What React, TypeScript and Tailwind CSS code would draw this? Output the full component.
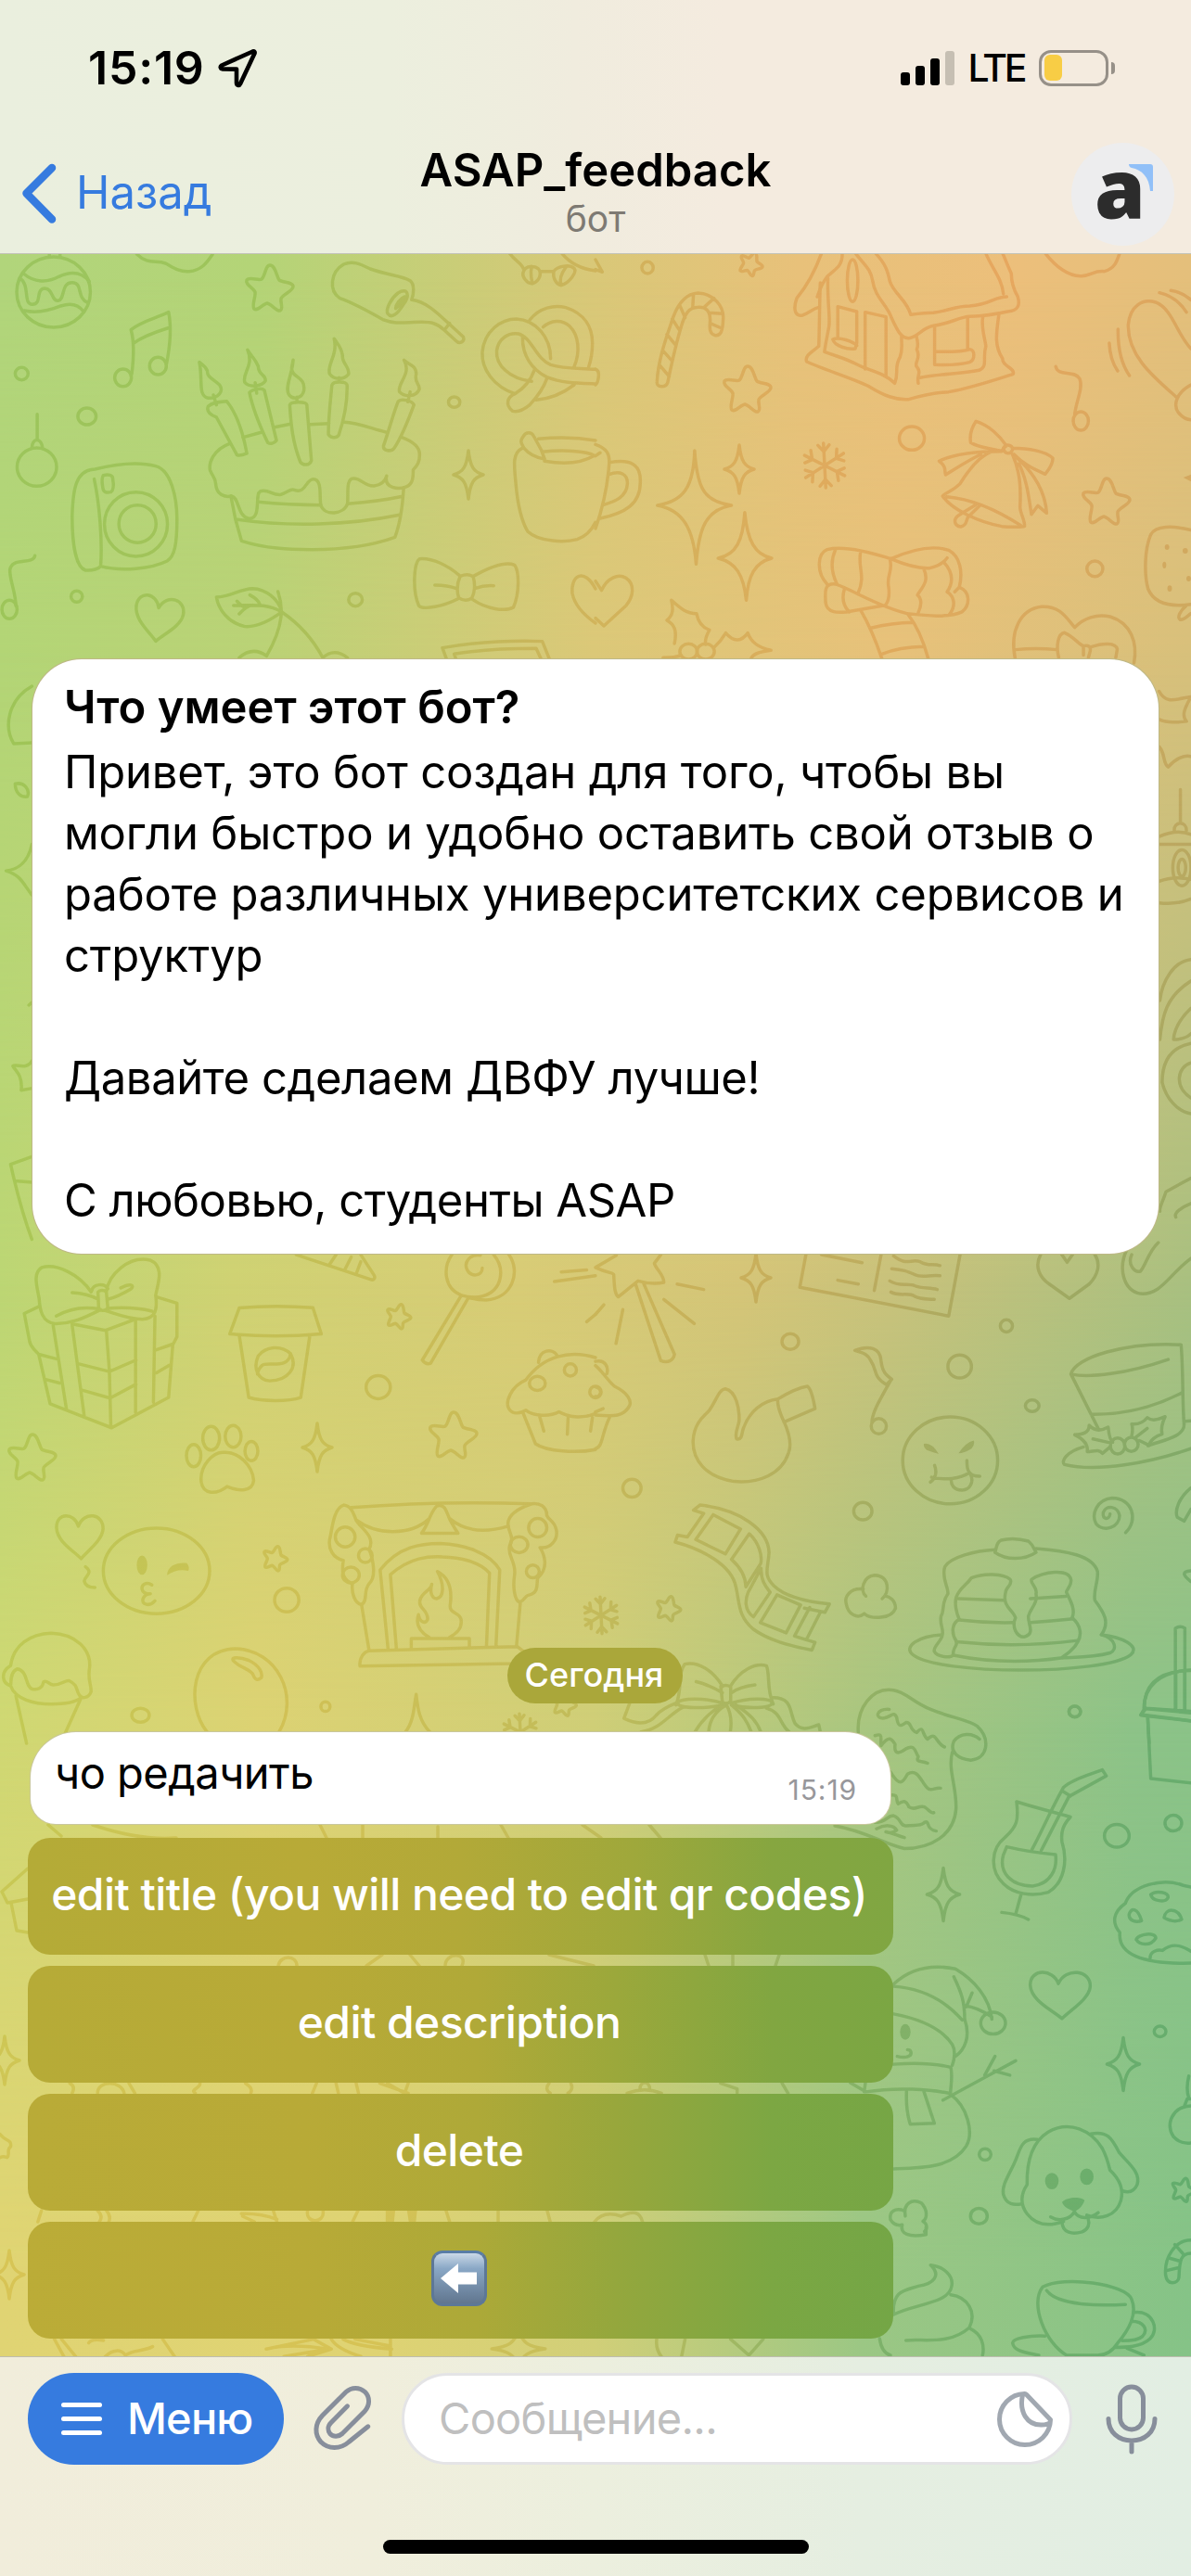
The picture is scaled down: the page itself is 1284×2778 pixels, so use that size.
import type { ReactNode } from "react";

/* ---------- Wallpaper ---------- */

const STAR =
  "M0 -24C6 -24 7 -12 10 -8C14 -5 25 -6 25 -1C25 4 13 8 12 12C11 17 15 23 11 25C7 26 2 18 -3 17C-8 18 -13 26 -17 23C-20 20 -15 9 -16 5C-18 0 -27 -3 -25 -8C-22 -12 -12 -7 -9 -9C-5 -12 -5 -24 0 -24Z";
const SPARKLE = "M0 -26C2 -8 6 -3 16 0C6 3 2 8 0 26C-2 8 -6 3 -16 0C-6 -3 -2 -8 0 -26Z";
const HEART = "M-2 -12C6 -34 34 -30 33 -8C32 8 12 22 2 34C-10 22 -32 10 -33 -10C-33 -32 -8 -32 -2 -12Z";
const FLAKE =
  "M0 -24V24M-21 -12L21 12M-21 12L21 -12M-6 -22L0 -15L6 -22M-6 22L0 15L6 22M-21 -4L-13 -7L-14 -17M21 -4L13 -7L14 -17M-21 4L-13 7L-14 17M21 4L13 7L14 17";

function Mark({ d, x, y, s = 1, r = 0, sy }: { d: string; x: number; y: number; s?: number; r?: number; sy?: number }) {
  return (
    <path d={d} vectorEffect="non-scaling-stroke" transform={`translate(${x} ${y}) rotate(${r}) scale(${s} ${sy ?? s})`} />
  );
}

function Patch({ t, d, solid, children }: { t: string; d: string[]; solid?: string[]; children?: ReactNode }) {
  return (
    <g transform={t}>
      {d.map((p, i) => (
        <path key={i} d={p} vectorEffect="non-scaling-stroke" />
      ))}
      {solid?.map((p, i) => (
        <path key={i} d={p} fill="#c6bad2" stroke="none" />
      ))}
      {children}
    </g>
  );
}

const ring = (x: number, y: number, rx: number, ry = rx) =>
  `M${x - rx} ${y}a${rx} ${ry} 0 1 0 ${rx * 2} 0a${rx} ${ry} 0 1 0 ${-rx * 2} 0Z`;

const TOP_LEFT = [
  // striped ball
  ring(141, 135, 97, 114),
  "M130 10V20M158 10V22M62 75C90 105 125 105 155 85C190 65 215 70 235 100M52 90C80 110 60 175 85 175C112 175 92 125 118 123C140 123 135 165 153 163C172 160 160 103 190 104C220 105 200 155 232 170M64 195C100 205 130 195 160 180C190 168 208 178 220 198",
  // cloud edge
  "M360 12C390 48 410 30 436 42C455 55 470 70 498 68C530 65 545 40 560 12",
  // notes
  "M345 257C370 230 410 220 444 200C452 250 448 310 438 370M345 257C355 300 352 350 347 400M352 300C380 275 415 262 446 250",
  ring(324, 412, 22, 28),
  ring(416, 374, 22, 28),
  ring(57, 399, 17, 20),
  ring(229, 537, 24, 27),
  ring(1196, 491, 15, 17),
  ring(202, 1120, 15, 18),
  ring(936, 1130, 18, 21),
  // bauble
  "M98 530V612M84 640C84 605 110 605 112 640",
  ring(97, 701, 52, 62),
  // camera
  "M250 708C310 690 370 685 410 698C450 710 466 800 466 870C466 950 460 990 440 1005C400 1030 320 1040 265 1022C260 1030 245 1037 225 1035C200 1025 190 950 190 860C192 770 200 710 250 708ZM248 740C262 820 270 940 265 1022",
  ring(358, 886, 83, 104),
  ring(362, 885, 49, 61),
  "M272 728C285 724 298 726 297 740C300 760 300 775 292 782C280 785 272 782 271 770C269 755 266 740 272 728Z",
  // quaver
  "M92 988C86 1020 30 990 26 1035C26 1070 40 1100 42 1150",
  ring(25, 1162, 20, 30),
  // dart
  "M905 45C930 32 950 45 975 60C1020 80 1060 82 1080 98C1092 110 1090 140 1084 160C1120 165 1150 200 1180 235L1220 280C1225 295 1210 305 1200 292L1170 258C1150 235 1135 232 1110 232C1070 232 1040 240 1010 225C960 190 930 170 895 155C865 130 870 70 905 45ZM1184 236L1170 258",
  "M1048 138C1075 118 1080 148 1062 175C1045 210 1030 220 1021 205C1015 190 1030 155 1048 138ZM1066 150C1054 155 1042 175 1042 188C1050 180 1062 165 1066 150Z",
  // bird feet
  "M1342 10C1360 40 1375 40 1380 65C1370 85 1390 110 1403 107C1420 100 1428 75 1418 60C1408 48 1385 50 1380 65M1400 52C1396 75 1400 100 1403 107M1422 68H1458C1455 90 1465 110 1478 113C1500 105 1520 70 1512 58C1500 45 1468 50 1458 68M1490 55C1478 75 1472 95 1478 113M1480 10C1500 40 1530 60 1568 66",
  // pretzel
  "M1356 464C1300 440 1268 385 1270 330C1275 260 1320 222 1360 222C1410 225 1450 280 1450 350M1400 424C1340 415 1305 370 1308 325C1312 285 1340 265 1365 270C1400 280 1410 350 1450 370C1490 385 1530 380 1568 385M1376 280C1375 340 1400 385 1440 410C1480 430 1520 430 1568 432M1395 225C1420 185 1460 175 1490 185C1540 205 1560 250 1560 300C1560 330 1555 360 1550 378M1430 248C1450 225 1480 222 1500 245C1525 275 1528 330 1512 376M1408 385C1395 430 1375 450 1356 464C1335 475 1330 500 1350 520C1365 525 1380 515 1395 500C1410 480 1430 450 1440 415M1412 484C1450 480 1480 465 1512 435",
  // cake
  "M605 625C560 645 550 690 553 710C558 730 568 735 568 755C570 790 590 800 610 795C630 800 625 860 655 868C690 870 670 790 685 780C705 770 720 795 740 790C755 785 765 770 775 775C805 790 805 740 825 740C850 740 840 800 845 825C855 860 905 855 915 820C918 790 910 740 930 738C950 735 960 765 985 762C1005 758 1015 745 1018 730C1010 770 1050 775 1070 765C1090 755 1088 725 1088 710C1100 695 1105 685 1105 660C1105 630 1080 615 1058 605M640 605L690 588M720 573L765 562M816 563L866 560M906 556C945 558 980 578 1016 588",
  "M608 795L620 870L636 940C700 965 760 968 820 968C900 968 980 955 1040 928C1052 890 1060 830 1063 768M620 870C760 895 920 890 1052 856M680 814Q760 824 845 824M915 820Q1000 812 1060 796",
  "M548 505C560 490 580 490 597 488C625 530 640 590 650 657C640 662 630 665 624 662L570 540C550 530 544 518 548 505ZM657 460C665 448 690 445 696 452L728 615C722 625 712 628 705 622C685 570 665 510 657 460ZM763 500C765 488 808 488 808 500L820 680C815 698 798 696 791 685C770 620 766 560 763 500ZM874 436C878 422 912 424 914 436C915 490 905 550 892 598C885 610 870 606 865 596C864 550 870 490 874 436ZM1048 490C1055 478 1085 485 1090 500C1075 550 1060 600 1038 640C1030 652 1008 650 1010 632C1025 580 1035 530 1048 490Z",
  "M525 362C535 420 520 470 548 478C575 480 590 455 578 435C560 415 545 410 546 390C542 375 532 370 525 362ZM652 322C670 375 635 400 645 428C658 445 690 440 699 422C700 400 680 405 680 375C672 350 660 340 652 322ZM772 355C770 400 750 440 760 465C770 485 795 480 800 455C806 405 768 415 768 380ZM880 286C890 340 860 370 868 400C880 420 905 420 918 400C920 375 900 365 902 340C898 310 890 305 880 286ZM1064 355C1085 400 1045 430 1052 458C1065 475 1095 475 1104 450C1106 430 1090 430 1096 400C1096 370 1075 370 1064 355ZM562 468L570 500M672 428L676 462M782 475V490M893 412V424M1080 458L1074 490",
  // bow tie
  "M1210 1052C1180 1020 1140 995 1105 998C1090 1010 1085 1100 1103 1150C1115 1165 1170 1150 1205 1128M1250 1052C1290 1025 1330 1005 1355 1018C1368 1040 1368 1110 1352 1155C1330 1170 1280 1160 1245 1130M1212 1054C1225 1048 1238 1048 1246 1056C1252 1080 1250 1110 1242 1126C1230 1135 1218 1133 1208 1124C1202 1100 1204 1075 1212 1054ZM1145 1083Q1180 1083 1202 1094M1250 1094Q1275 1083 1300 1085",
  // cherries
  "M570 1122C610 1120 630 1095 665 1094C700 1095 735 1130 742 1170C720 1190 680 1220 645 1217C600 1205 575 1160 570 1122ZM615 1149C660 1150 700 1140 742 1170M630 1176Q650 1150 665 1148M624 1135Q635 1150 640 1152M658 1115Q680 1130 684 1145M732 1104C745 1150 750 1210 702 1312M742 1170C790 1210 825 1260 850 1318M630 1318Q665 1280 702 1312M850 1318Q880 1285 915 1318",
  // picture frame
  "M1175 1320L1165 1286C1250 1268 1350 1262 1428 1265L1446 1320M1200 1320L1196 1306C1270 1290 1340 1288 1412 1288L1424 1320",
  // mug
  "M1418 610C1460 605 1520 605 1568 615M1375 640C1350 655 1353 690 1358 750C1362 810 1370 870 1390 910C1420 945 1490 945 1520 935C1545 925 1560 900 1568 880M1378 602C1385 585 1400 588 1405 600L1425 645L1434 675C1410 670 1390 655 1380 640C1370 620 1370 615 1378 602ZM1428 652C1480 645 1545 648 1565 664C1530 690 1480 692 1434 682",
];

const TOP_RIGHT = [
  "M0 30L18 70L0 62",
  ring(137, 56, 15, 19),
  ring(833, 608, 33, 38),
  ring(1315, 1030, 21, 25),
  "M0 385Q10 388 8 410Q6 430 0 435",
  // candy cane
  "M162 425C165 350 190 270 205 215C220 165 240 140 270 138C310 140 340 180 336 225C335 260 330 278 315 275C300 270 300 255 302 225C302 195 290 182 270 184C245 185 235 205 225 250C210 310 200 370 190 428C185 445 160 445 162 425ZM258 142L256 184M222 178L236 218M202 222L222 260M188 272L212 308M178 325L202 358M168 370L194 408M312 155L288 182M334 205L300 202M332 252L302 236",
  // gingerbread house
  "M595 10C580 60 560 110 530 155C520 190 525 215 545 210C560 205 570 190 588 184M650 10C650 55 630 60 610 85C595 110 588 135 584 150M685 10C710 50 725 60 730 100C735 150 770 180 780 220C795 260 805 285 825 284C850 280 860 250 890 244C930 238 960 215 985 214C1030 212 1060 205 1085 198C1115 195 1118 175 1112 150C1098 120 1095 100 1095 75C1085 50 1080 30 1072 10M738 10C765 45 770 70 775 100C785 140 820 160 830 208C850 205 870 202 890 202C930 195 950 180 985 180C1040 175 1050 150 1083 150M1028 10C1045 60 1070 90 1074 140",
  "M592 105C590 160 590 240 588 310C570 330 550 340 556 360C600 385 680 415 720 440C760 470 790 485 825 482C870 465 900 460 930 458C990 445 1050 420 1100 400C1105 380 1070 375 1072 350C1050 310 1055 270 1062 210M612 90C610 160 618 210 615 245C610 280 605 305 603 328C640 345 660 350 690 370C720 390 760 395 788 430C800 395 785 380 802 345C810 320 805 300 806 280M845 278C850 300 850 310 846 320C858 350 840 360 845 375C860 395 845 405 850 430M855 412C900 400 960 400 1010 388C1035 375 1018 350 1028 310C1025 280 1015 250 1020 216",
  "M638 182L688 198V300L684 318C665 322 630 310 625 288C640 278 680 295 688 308M638 182V285M710 384V200L765 215V405M893 246V370C930 372 960 370 985 362C1000 355 1000 320 985 320C965 330 920 328 896 328M980 218V320",
  ring(677, 98, 14, 68),
  "M1185 10C1210 50 1245 85 1280 83C1310 80 1310 65 1340 68C1365 60 1372 40 1380 10",
  // shaking heart with motion lines
  "M1530 475C1470 410 1400 340 1403 240C1408 180 1440 155 1475 168C1520 190 1530 270 1568 318M1568 435C1530 460 1520 500 1535 525C1545 540 1555 548 1568 548M1353 300Q1355 355 1375 390M1376 255Q1375 350 1406 405M1485 137Q1530 150 1556 200M1515 130Q1545 135 1568 160",
  "M1212 376C1218 410 1260 385 1275 415C1285 445 1265 490 1262 530",
  ring(1278, 552, 20, 30),
  // bell with ribbon
  "M1002 553C1035 565 1065 600 1082 632C1075 640 1070 645 1070 650C1040 640 1010 640 988 622C985 600 990 575 1002 553ZM1098 640C1140 640 1185 650 1204 672C1205 690 1190 715 1184 724C1150 705 1125 690 1102 660M1074 640C1080 625 1100 628 1098 645C1094 660 1078 662 1074 640ZM1070 650C1000 650 940 660 905 682C925 700 918 710 922 726C950 705 980 680 1015 660M1045 650C1010 665 980 715 960 755C940 780 920 785 914 795C940 840 1010 880 1070 893C1095 896 1125 895 1130 892C1130 870 1118 850 1118 830C1120 780 1120 720 1098 660M925 797C1000 805 1070 850 1120 890M1098 660C1160 720 1185 790 1188 850L1165 826L1148 854C1140 790 1135 740 1115 690M1000 824L958 856C940 870 945 892 962 894C980 890 975 870 982 862L1010 828",
  // sparkles
  "M261 648C268 780 290 812 358 825C290 840 272 900 265 1015C258 900 230 840 163 825C230 812 258 770 261 648ZM393 848C400 940 420 985 464 996C420 1010 402 1050 397 1132C390 1050 370 1010 323 996C370 985 388 940 393 848Z",
  // mug handle
  "M0 628C30 640 38 660 36 690C32 760 20 830 0 900M38 686C90 675 120 690 118 750C118 820 80 850 10 868M34 726C65 710 85 725 84 755C82 800 50 812 20 824M0 665L12 655",
  "M0 1070L16 1100C30 1060 60 1045 80 1060C105 1080 100 1120 80 1150L22 1215L0 1190",
  // holly
  "M208 1272C215 1230 208 1210 188 1197C205 1180 205 1160 200 1132C225 1160 240 1175 266 1175C270 1200 280 1220 300 1228C290 1250 288 1265 290 1275M312 1285C325 1270 335 1255 343 1238C365 1270 385 1265 401 1238C410 1270 430 1285 462 1294C430 1300 415 1305 410 1320M178 1318Q210 1318 225 1310",
  ring(245, 1298, 23, 25),
  ring(290, 1298, 23, 25),
  // scarf
  "M610 1080C580 1040 585 980 610 968C650 955 720 975 778 998C820 975 880 950 930 970C960 990 968 1040 958 1090C990 1105 985 1150 965 1170C930 1190 870 1182 820 1175C740 1150 680 1100 632 1080C600 1075 605 1110 606 1140C610 1175 640 1172 660 1170L755 1150M778 998C820 1020 850 1030 880 1028C900 1022 915 1015 926 995M632 968C620 1000 620 1040 636 1080M698 975C690 1030 712 1050 692 1108M775 998C785 1040 765 1050 772 1090C775 1120 770 1140 762 1150M864 1030C880 1070 860 1090 848 1115C862 1130 858 1150 850 1172M918 1010C940 1040 945 1070 926 1105C945 1120 950 1150 932 1178M655 1098Q645 1140 668 1170M700 1168C725 1220 740 1270 754 1320M822 1176C850 1220 865 1270 876 1320M725 1222Q780 1205 836 1204M754 1306Q800 1284 864 1282M958 1090L946 1105",
  // heart box
  "M1105 1320C1090 1230 1120 1160 1175 1153C1225 1150 1240 1190 1262 1220C1285 1190 1320 1175 1355 1185C1410 1205 1428 1270 1418 1335M1106 1292Q1160 1286 1215 1292M1220 1318C1212 1280 1218 1240 1235 1237C1260 1250 1272 1275 1285 1280V1310M1305 1283C1335 1270 1370 1268 1374 1290L1370 1318M1285 1280Q1305 1275 1303 1295L1298 1318",
  // strawberry
  "M1568 905C1520 890 1475 890 1462 920C1445 970 1445 1050 1455 1095C1470 1140 1510 1155 1568 1145M1555 1150C1540 1165 1530 1190 1540 1195C1555 1195 1560 1180 1568 1175",
];

const MID_LEFT = [
  // gift
  "M240 155C210 100 150 65 110 78C85 95 98 140 103 175C105 210 110 250 145 254C185 255 215 240 265 210M280 155C285 100 340 40 395 55C435 75 415 130 410 165C415 210 410 238 375 240C340 240 310 225 275 212M242 150C245 130 275 125 284 145M258 155C262 148 275 148 280 155L284 205C278 215 265 215 260 208ZM190 157Q230 160 258 177M285 177Q310 170 345 145C355 135 345 125 318 142M148 230Q200 195 262 208M284 206Q350 200 400 215",
  "M103 200L64 222L78 310C82 330 95 340 102 350L132 505L294 580L444 485L455 320L466 295V190L412 170M190 255L278 275L357 240M280 275L288 400L292 580M140 260L175 522M190 258L222 545M357 240V532M408 230L404 500M102 350L148 364M118 428L157 440M208 380L288 404L358 368M216 462L290 487L358 444M412 336L455 318M412 408L446 384",
  // pizza
  "M780 38L975 115C985 120 990 110 984 100L950 38M885 38L868 68M925 45L908 85M950 60L938 98",
  // lollipop
  "M1215 165C1170 145 1165 80 1190 38M1300 38C1330 80 1325 150 1270 168C1250 175 1230 170 1215 165M1340 38C1372 90 1350 175 1280 180C1260 180 1250 178 1235 172M1270 80C1270 105 1240 110 1230 85C1220 60 1240 35 1265 40M1215 165L1112 368C1118 378 1125 382 1134 378L1234 172",
  ring(996, 453, 32, 36),
  ring(755, 1119, 32, 37),
  ring(370, 1480, 23, 22),
  ring(857, 1453, 12, 15),
  // coffee cup
  "M630 205C690 198 760 198 824 204L846 286C770 294 680 294 605 286ZM630 290L655 485C690 498 760 498 792 485L816 290M765 348C740 320 700 325 680 355C665 395 680 430 710 433C760 432 785 390 765 348ZM765 348C760 400 700 370 690 385Q680 395 678 412",
  // paw
  "M590 657C560 655 525 700 530 750C535 790 570 790 598 764C630 780 665 780 668 745C665 700 630 655 590 657Z",
  ring(510, 667, 19, 35),
  ring(556, 613, 22, 37),
  ring(614, 607, 21, 34),
  ring(662, 653, 17, 30),
  // wand rays
  "M1478 92L1545 86M1460 122L1568 104M1545 248L1568 225",
  // muffin
  "M1568 360C1500 335 1430 355 1385 430C1345 450 1330 500 1340 520C1350 540 1370 535 1385 525C1405 545 1450 545 1472 530C1500 550 1540 550 1568 535M1378 535L1410 630C1440 655 1520 660 1568 648M1420 540L1432 590M1496 548L1494 600M1560 548L1555 590M1418 375C1420 335 1455 330 1466 352",
  ring(1415, 441, 21, 22),
  ring(1502, 399, 16, 19),
  ring(1568, 468, 15, 18),
  // kissing face
  ring(412, 1028, 140, 134),
  "M225 1015C248 1035 222 1045 222 1060C225 1078 240 1080 250 1080M400 1072C385 1060 372 1072 374 1085C376 1100 390 1100 396 1100C380 1100 370 1120 380 1130C392 1138 402 1130 408 1122",
  // fireplace
  "M925 830C1080 815 1250 812 1400 818M905 822C880 830 875 890 870 920C860 960 880 990 904 995C900 1030 900 1055 928 1068C925 1100 935 1130 952 1134C970 1120 955 1095 972 1068C990 1050 985 1000 972 960C990 920 950 895 938 870C930 845 925 825 905 822ZM1400 818C1370 830 1335 850 1338 885C1340 910 1355 920 1342 950C1335 980 1360 1000 1355 1040C1350 1080 1355 1120 1368 1126C1385 1120 1380 1105 1395 1103C1420 1095 1412 1070 1416 1050C1445 1020 1435 980 1422 955C1450 960 1470 930 1465 900C1460 870 1445 870 1440 855C1440 825 1420 815 1400 818Z",
  "M940 870C990 915 1080 920 1130 865M1185 865C1230 910 1290 905 1338 888M1150 825C1160 820 1170 825 1175 840C1185 875 1190 880 1206 910H1110C1130 880 1130 850 1150 825Z",
  ring(909, 922, 26, 31),
  ring(962, 980, 18, 22),
  ring(924, 1041, 22, 25),
  ring(1416, 893, 24, 29),
  ring(1367, 946, 23, 25),
  ring(1403, 1030, 17, 20),
  "M1022 1274L1001 1025C1050 950 1110 942 1160 942C1220 945 1290 970 1316 1025L1306 1265M1044 1274L1028 1040C1080 985 1130 982 1165 984C1210 985 1265 1000 1289 1035L1281 1265M952 1134L972 1278M1370 1130L1360 1265M972 1278L1362 1265L1400 1300L1350 1318L948 1326C945 1300 960 1280 972 1278ZM1083 1268V1240H1236V1264M1130 1236C1100 1215 1095 1190 1102 1165C1105 1190 1120 1195 1126 1180C1128 1150 1100 1145 1106 1120C1110 1095 1135 1090 1137 1070C1130 1100 1140 1115 1150 1115C1170 1110 1170 1070 1152 1030C1185 1050 1190 1090 1186 1130C1180 1165 1210 1155 1214 1180C1218 1210 1200 1225 1184 1236",
  // ice cream
  "M28 1325C35 1260 80 1225 135 1223C200 1225 240 1275 236 1330C230 1370 240 1380 240 1405C235 1425 215 1432 208 1415C200 1400 205 1385 182 1372C170 1370 165 1385 140 1385C130 1385 125 1370 115 1375C112 1395 100 1402 85 1398C65 1390 75 1340 45 1335C25 1345 30 1380 28 1388C5 1380 0 1345 28 1325ZM28 1388C40 1430 90 1445 135 1445C170 1445 200 1438 212 1427M42 1420L70 1568M212 1430L172 1535",
  // balloon
  "M545 1532C490 1450 500 1275 620 1272C730 1275 790 1420 735 1532M615 1310C605 1295 635 1300 655 1308C685 1325 692 1350 688 1363C675 1375 670 1365 665 1350C650 1330 630 1330 615 1310Z",
  "M1068 1532C1090 1500 1090 1450 1096 1415C1100 1460 1105 1500 1132 1532",
];

const MID_RIGHT = [
  // magic wand
  "M0 78C30 95 48 95 48 100C50 140 50 160 60 170L112 120C140 130 160 130 180 125C180 100 160 85 155 65L172 38M0 78L55 40M105 128L172 370C190 378 205 370 208 350L126 126M215 130L285 147M180 178L260 254M72 210L54 316M22 195L0 225",
  // letter
  "M554 38L538 140L930 230L960 38M595 38L702 63M752 38L734 150M638 118L692 130M785 42C820 75 830 50 855 60C875 75 890 65 907 72M780 82C810 85 820 90 840 100C860 112 880 100 907 104M775 120C800 140 825 125 840 135C860 145 880 140 900 147M778 155C800 170 825 155 840 168C860 180 875 175 892 178",
  ring(513, 310, 22, 25),
  ring(959, 388, 31, 36),
  ring(1082, 261, 16, 19),
  ring(1150, 511, 18, 18),
  ring(96, 769, 24, 28),
  ring(704, 841, 24, 27),
  ring(1262, 1469, 15, 17),
  // heart and sock
  "M1172 38C1155 75 1170 110 1195 130L1248 175L1300 130C1325 100 1330 65 1315 38M1228 38L1242 62L1256 38M1400 20C1375 80 1390 150 1435 160C1490 165 1510 100 1568 50M1412 38C1400 70 1420 95 1435 90C1450 70 1455 30 1482 0",
  // ribbon note
  "M683 338C720 320 750 330 752 370C755 405 765 415 780 428L766 445C730 420 742 400 725 370C715 345 700 345 683 338ZM778 430C745 500 730 530 728 560",
  ring(746, 575, 20, 24),
  // muffin edge
  "M0 372C25 365 35 390 30 410M0 385C20 405 30 430 50 450C85 470 95 495 90 510C75 545 50 545 0 540M38 545C15 600 20 640 0 645M0 452Q15 455 13 470Q10 485 0 482M0 530L20 520",
  // fortune cookie
  "M300 525C320 490 325 460 342 458C370 465 380 520 378 560C375 580 365 600 372 615C388 620 385 590 390 580C405 530 440 495 480 490C478 515 490 545 496 560C515 610 515 640 508 660C490 725 430 755 365 748C290 735 255 680 257 620C260 560 290 540 300 525ZM480 490C505 472 530 455 558 450C570 460 575 500 578 520L496 562",
  // tongue face
  ring(934, 682, 125, 136),
  "M893 698C900 720 895 740 882 750M885 735C920 745 960 740 985 720C990 730 1000 732 1012 732M978 682C978 700 980 715 985 720C1000 750 985 775 965 775C945 775 935 760 937 740",
  // top hat
  "M1252 412C1260 360 1400 310 1542 320C1548 400 1545 500 1550 570C1550 610 1490 620 1455 636M1252 412C1300 425 1400 410 1508 366M1252 412L1325 585M1305 538C1400 540 1480 510 1545 470M1285 640C1240 655 1225 685 1235 695C1320 720 1460 690 1568 645M1552 560L1568 558",
  "M1262 602C1285 600 1300 595 1300 572C1310 585 1325 595 1350 578C1352 600 1355 620 1362 625M1262 602C1285 615 1298 630 1295 655C1310 655 1325 645 1335 660L1355 640M1310 615L1352 626M1412 605C1415 590 1415 580 1412 568C1430 570 1445 560 1453 548C1465 560 1480 555 1500 545C1490 570 1490 590 1492 600C1475 605 1460 620 1458 635L1432 620M1420 612L1453 582",
  ring(1375, 637, 19, 25),
  ring(1411, 632, 18, 22),
  "M1396 908C1430 870 1415 800 1360 800C1320 805 1305 850 1318 880C1340 910 1380 890 1380 855C1375 825 1345 820 1337 845C1335 868 1352 870 1355 850",
  "M1568 768C1535 800 1525 840 1532 860L1550 872L1568 835M1568 1028C1540 1030 1550 1045 1568 1062",
  // film strip
  "M275 822C380 835 455 900 457 970C455 1020 440 1040 470 1075C500 1110 560 1125 616 1132L604 1158L550 1145M275 822L258 838L285 848L242 922L216 916L210 938C280 960 360 1010 370 1080C380 1130 375 1170 415 1210C455 1245 510 1262 570 1276L578 1252L555 1244L592 1158M310 852L382 897L342 975L264 930ZM405 912C430 940 440 980 435 1005L396 1078C395 1040 375 1010 358 992ZM436 1020C435 1060 450 1080 460 1095L416 1172C390 1150 395 1115 402 1095ZM478 1103L540 1135L502 1222L434 1190ZM564 1143L524 1232L555 1244",
  // popcorn
  "M712 1107C695 1090 705 1045 735 1042C775 1045 775 1095 755 1115M705 1085C670 1080 655 1110 660 1130C665 1165 690 1180 708 1162C725 1180 780 1180 790 1145C790 1120 775 1108 762 1106",
  // pancakes
  "M1052 962C1000 965 935 985 920 1015C910 1050 930 1080 928 1100C910 1130 920 1150 910 1170C905 1200 920 1210 912 1235C905 1255 890 1265 892 1280C900 1300 935 1300 942 1292C940 1265 955 1265 950 1248C935 1220 940 1190 958 1180C950 1160 945 1130 950 1110C960 1080 975 1075 990 1050C1020 1035 1075 1035 1092 1055C1100 1070 1080 1080 1080 1095C1070 1140 1100 1150 1106 1175C1095 1205 1110 1235 1128 1235C1160 1225 1138 1195 1140 1170C1145 1145 1165 1130 1160 1100C1165 1080 1145 1070 1148 1055C1180 1030 1245 1020 1252 1055C1255 1075 1240 1085 1240 1095C1250 1120 1265 1150 1255 1175C1280 1200 1280 1230 1270 1250C1260 1275 1245 1285 1230 1298M1160 958C1240 965 1310 980 1322 1030C1325 1060 1310 1090 1315 1120C1340 1160 1355 1190 1332 1228C1370 1240 1375 1275 1355 1285C1310 1300 1270 1298 1230 1300",
  "M955 1115L1076 1120M1145 1115L1238 1108M958 1182Q1030 1192 1100 1190M1145 1190Q1200 1185 1258 1178M950 1250Q1110 1270 1270 1246M942 1292Q1080 1325 1230 1300M1068 932C1090 925 1120 928 1140 935C1155 950 1155 960 1160 970C1130 995 1080 995 1052 970C1058 950 1055 940 1068 932ZM912 1228C850 1232 810 1265 835 1290C900 1355 1340 1355 1410 1290C1435 1262 1385 1235 1332 1228",
  // gift bow
  "M335 1390C310 1340 270 1310 235 1320C215 1350 230 1395 212 1448M355 1390C380 1340 420 1315 450 1325C460 1350 450 1400 468 1445M330 1390C340 1385 350 1385 356 1392V1435C350 1445 340 1445 334 1438ZM265 1375Q300 1385 334 1410M358 1410Q380 1390 420 1385M335 1442C290 1425 225 1425 215 1442C220 1460 290 1460 335 1448M358 1442C400 1425 460 1425 465 1440C465 1460 400 1460 358 1448M90 1442L75 1490C110 1510 140 1510 160 1480C175 1460 195 1450 212 1442M120 1532C170 1525 190 1480 230 1455M468 1425C520 1425 510 1470 525 1505C545 1535 570 1515 588 1510L592 1532M450 1458C490 1470 485 1510 510 1532M335 1448C300 1470 280 1495 262 1532M345 1448C310 1470 300 1500 298 1532M345 1448C360 1480 358 1510 355 1532M358 1448C390 1480 400 1500 410 1532M370 1448C410 1480 425 1500 435 1532",
  // drink
  "M1527 1465V1208C1535 1202 1545 1202 1552 1208V1465M1445 1458C1445 1380 1485 1340 1568 1340M1450 1458L1568 1468M1436 1480L1450 1458M1436 1480L1568 1498M1454 1485L1458 1568",
];

const LOW_RIGHT = [
  // scroll
  "M76 145C70 90 120 40 190 48C230 52 250 75 310 92C370 110 430 115 460 130C505 160 495 205 440 208C400 205 370 190 385 165C405 145 445 145 468 160M380 190C365 230 395 270 392 320C385 380 310 410 225 410C160 400 100 370 0 358M176 92C130 90 130 115 160 112C180 110 190 95 200 110C205 135 215 130 230 122C250 120 240 140 265 145C290 125 280 150 300 160C330 140 325 170 355 178M130 152C160 145 145 160 150 175C175 150 185 160 195 172C190 200 215 190 230 182C260 170 260 190 270 200C260 215 280 208 300 215M180 235C210 270 220 260 235 240C270 225 280 260 300 272C310 280 325 270 342 272M180 288C210 285 195 300 205 308C225 300 230 300 240 315C260 325 270 310 290 315C310 325 310 330 320 328M130 350C170 350 165 335 190 335C215 340 210 360 230 358C260 355 280 360 290 350C310 345 290 365 328 370M135 365C160 355 190 355 200 368C180 380 165 370 165 372C190 375 200 380 225 385",
  // cocktail
  "M588 303C640 315 700 325 762 338C740 355 730 370 735 395C755 440 740 490 690 510C640 520 580 515 545 490C500 460 505 410 550 385C590 360 595 345 588 303ZM556 406C610 415 660 420 714 424C720 455 700 490 640 496C570 495 530 465 545 425ZM638 412C670 370 700 320 740 270C770 250 830 240 865 230L878 244L760 290M668 414L758 290M735 278L762 290M602 516L585 560M540 556C570 558 600 562 626 572",
  ring(776, 97, 19, 12),
  ring(912, 381, 40, 26),
  ring(1095, 352, 27, 18),
  ring(1052, 828, 19, 12),
  ring(486, 1109, 19, 13),
  ring(466, 1250, 27, 18),
  // cup edge
  "M1000 90C1000 40 1050 5 1152 2M1103 5V92M1132 5V92M1000 90L1152 100M990 104L1002 90M990 104L1152 118M1012 108L1022 250L1152 260",
  // cookie
  "M940 535C960 495 1060 475 1130 495L1152 498M940 535C900 555 895 580 922 602C915 650 990 675 1152 672M1020 660C1020 645 1045 640 1060 643C1090 625 1120 630 1152 645M1022 515C1040 505 1080 510 1078 522C1070 535 1025 530 1022 515ZM952 560C960 545 980 545 992 575C975 580 950 575 952 560ZM1065 568C1070 545 1110 545 1122 572C1100 580 1075 572 1065 568ZM975 618C980 605 1040 600 1038 615C1020 635 985 630 975 618Z",
  // snowman
  "M190 720C250 680 320 675 390 685C450 710 500 750 508 800M190 725C290 730 360 760 412 802M385 703C410 740 420 760 420 800C440 840 420 870 390 885M190 788C280 800 345 820 380 858C390 870 388 890 380 905M422 770C455 772 480 782 508 795M444 740L425 772M190 903C250 900 320 900 375 910C382 930 375 950 374 970C310 960 200 955 100 966L50 945M100 940L95 966M202 885C230 890 250 885 246 875Q245 870 235 870M350 985L480 935L585 895M485 928L518 885M515 918L566 928M374 972C430 1000 450 1060 425 1090C380 1140 280 1140 190 1142M232 965C230 1000 235 1020 244 1040L322 1038L288 965",
  ring(512, 809, 40, 25),
  // dog
  "M655 1075C600 1070 600 1100 580 1130C560 1160 540 1180 545 1200C555 1225 580 1225 605 1222M622 1178C600 1200 600 1225 622 1245C650 1270 690 1275 740 1262M622 1178C620 1120 640 1080 690 1058C760 1030 830 1055 865 1095C880 1115 885 1130 890 1145C920 1165 935 1190 925 1215C910 1250 860 1260 815 1248M828 1062C880 1055 895 1070 920 1105C950 1130 990 1150 978 1178C965 1200 940 1195 928 1192M775 1240C760 1260 720 1262 698 1252M775 1240C790 1260 830 1255 852 1242M735 1262C735 1290 770 1292 800 1286C820 1280 825 1268 820 1258",
  // popcorn bit
  "M228 1250C220 1220 250 1210 280 1220C300 1235 300 1255 285 1262C300 1268 300 1280 290 1285M225 1238C195 1230 175 1240 180 1258C190 1270 205 1272 218 1270C210 1290 240 1300 295 1292V1275",
  // whipped cream
  "M190 1475C185 1420 225 1420 270 1410C320 1405 345 1385 310 1362C350 1365 385 1385 378 1410C370 1450 260 1450 190 1475M375 1430C430 1435 460 1470 435 1505C370 1545 290 1530 230 1534M145 1530C150 1555 165 1565 180 1568M440 1508C475 1520 485 1545 478 1568",
  // teacup
  "M672 1412C740 1385 940 1405 960 1440C980 1475 950 1510 915 1540C890 1568 860 1568 850 1568H750C680 1540 630 1450 672 1412ZM685 1420C720 1455 860 1455 940 1452M968 1470C1030 1465 1050 1510 1020 1530C990 1550 940 1550 905 1550M960 1490C1000 1490 1015 1510 995 1525C980 1535 950 1535 930 1535M680 1524C630 1522 575 1530 575 1540C580 1560 620 1562 660 1568M945 1552L1000 1568",
  "M1145 930Q1135 960 1145 980M1152 998C1090 1000 1070 1040 1095 1068C1110 1080 1130 1085 1152 1083M1130 1000L1140 982H1152",
  // cane
  "M1152 1305C1100 1305 1065 1345 1070 1385C1075 1410 1110 1405 1113 1390C1115 1350 1120 1335 1152 1335M1100 1315L1125 1335M1078 1345L1112 1352M1070 1375L1112 1368",
];

const CARD_EDGES = [
  "M42 95C10 130 5 200 18 242L42 240M20 345C32 340 40 360 36 378C28 380 20 370 20 345ZM42 500C36 555 20 565 8 568C28 580 30 600 42 630M42 905L38 912M42 1055C35 1080 20 1060 17 1068C20 1080 30 1090 28 1130L42 1125M42 1300L14 1320C22 1390 30 1450 42 1512M20 1362L42 1366",
  "M1526 108C1535 140 1545 130 1568 122C1560 150 1555 170 1562 185C1545 190 1530 185 1526 180M1526 250C1535 270 1530 290 1538 302C1548 280 1560 270 1568 275M1554 360V445M1546 465C1545 440 1562 440 1562 465M1526 480Q1550 460 1568 475M1526 500H1568M1526 650Q1550 655 1568 640M1526 595Q1545 580 1568 590M1568 795C1545 800 1530 850 1527 900M1568 850C1535 890 1530 940 1527 1000M1568 920C1545 960 1545 1000 1545 1000Q1560 1000 1568 985M1568 1010C1540 1020 1530 1060 1530 1110C1535 1150 1550 1185 1568 1190M1568 1060C1550 1070 1545 1120 1568 1150M1568 1355L1535 1390C1530 1420 1526 1430 1527 1440M1568 1420C1555 1430 1545 1445 1548 1455",
  ring(1556, 560, 12, 46),
  ring(1556, 560, 5, 22),
];

const BUTTON_GAPS = [
  "M0 455C10 480 20 470 18 495C10 505 18 520 12 530C5 525 0 530 0 530",
  "M118 290Q128 300 122 322M165 322C165 280 205 280 210 322M218 290L228 322M330 322C320 310 340 305 338 290M415 290Q428 305 424 322M535 290L528 322M568 290L572 322M602 290L606 322M642 290L690 322M655 290L682 320M690 290L684 322M928 290Q920 310 930 322M965 290Q970 310 960 322M1060 322Q1090 300 1118 322M1082 312C1080 280 1100 280 1098 312M1218 290L1246 308V322M1322 290L1332 322",
  "M70 702L64 738M165 702Q175 720 168 738M180 702Q188 720 184 738M335 702L326 738M408 712Q440 710 468 730M410 720L430 738M462 702L468 738M520 702C515 745 550 745 546 702M605 702L596 738M754 702L760 738M842 702V738M925 702L930 738M1005 738Q1020 700 1050 720Q1080 690 1086 738",
  "M92 1118L108 1174M104 1118L128 1174M150 1130Q155 1115 175 1122M178 1174C190 1150 205 1150 212 1170C225 1150 240 1160 258 1142M275 1118L295 1174M450 1150L530 1118L560 1150L520 1174M450 1150Q490 1130 555 1150L480 1174M560 1118Q570 1150 610 1174M580 1118Q600 1140 662 1150M600 1118L660 1140M660 1118V1174M1110 1118Q1108 1150 1118 1174M1158 1118L1152 1174M1235 1118L1266 1170L1290 1118",
];

function Wallpaper() {
  return (
    <div className="absolute inset-0 isolate" aria-hidden="true">
      <div className="absolute inset-0 bg-[linear-gradient(90deg,#b1d57b_0px,#b4d477_280px,#d9c878_640px,#e8c17a_860px,#ecbf7b_1100px,#e4bf7b_1284px)]" />
      <div className="absolute inset-0 bg-[linear-gradient(90deg,#b3d576_0px,#bad276_280px,#dbc878_640px,#e7c17a_960px,#d8c07b_1284px)] mask-[linear-gradient(180deg,transparent_300px,#000_700px)]" />
      <div className="absolute inset-0 bg-[linear-gradient(90deg,#bcd674_0px,#cfd273_250px,#d8cc76_560px,#d5c578_800px,#c9c27b_960px,#a9c080_1284px)] mask-[linear-gradient(180deg,transparent_700px,#000_1380px)]" />
      <div className="absolute inset-0 bg-[linear-gradient(90deg,#cfd873_0px,#dcd273_280px,#cfce77_640px,#a9c680_930px,#8dc388_1220px,#8bc388_1284px)] mask-[linear-gradient(180deg,transparent_1380px,#000_1860px)]" />
      <div className="absolute inset-0 bg-[linear-gradient(90deg,#e0d473_0px,#dfd373_400px,#d1cf78_640px,#9bc784_930px,#85c387_1284px)] mask-[linear-gradient(180deg,transparent_1860px,#000_2450px)]" />
      <svg
        className="absolute inset-0 mix-blend-color-burn"
        width="1284"
        height="2778"
        viewBox="0 0 1284 2778"
        fill="none"
        stroke="#c6bad2"
        strokeWidth="3.5"
        strokeLinecap="round"
        strokeLinejoin="round"
      >
        <Patch t="translate(0 270) scale(.4094 .3333)" d={TOP_LEFT} />
        <Patch
          t="translate(642 270) scale(.4094 .3333)"
          d={TOP_RIGHT}
          solid={[ring(1505, 960, 6, 9), ring(1553, 972, 7, 9), ring(1498, 1018, 5, 11), ring(1562, 1062, 6, 9), ring(1512, 1094, 6, 10), "M1548 735L1568 725V748Z"]}
        />
        <Patch
          t="translate(0 1340) scale(.4094 .3444)"
          d={MID_LEFT}
          solid={[ring(374, 1010, 14, 30), "M440 1042C440 1010 470 1000 492 1004Q500 1015 496 1028Q465 1020 440 1042Z"]}
        />
        <Patch
          t="translate(642 1340) scale(.4094 .3444)"
          d={MID_RIGHT}
          solid={["M865 630Q885 625 904 662Q895 660 872 650Q862 640 865 630ZM996 620Q975 625 956 660Q970 660 990 645Q1000 632 996 620Z"]}
        />
        <Patch
          t="translate(900 1800) scale(.3333 .4719)"
          d={LOW_RIGHT}
          solid={[
            ring(228, 829, 17, 18),
            ring(702, 1170, 22, 19),
            ring(815, 1160, 22, 19),
            "M735 1218C750 1205 800 1205 808 1214C800 1230 785 1236 775 1240C760 1235 740 1230 735 1218Z",
          ]}
        />
        <Patch t="translate(0 700) scale(.8189 .421)" d={CARD_EDGES} />
        <Patch t="translate(0 2150) scale(.6378 .3333)" d={BUTTON_GAPS} solid={["M652 702H668L666 738H652ZM688 702H705L703 738H691Z"]} />

        {/* Slivers above and beside the keyboard buttons */}
        <path d="M52 1968L66 1980M100 1968Q150 1985 190 1982M345 1968L352 1982M391 1968V1982M472 1970V1982M540 1968L548 1982M628 1968L648 1982M700 1968L712 1982M30 2015L2 2040L8 2052L30 2048M12 2052L18 2082L30 2084M300 2120C302 2108 320 2108 320 2120M395 2120L412 2108M442 2108L452 2120M480 2120C480 2105 505 2105 498 2120M592 2108L640 2120M760 2108L764 2120M790 2108V2120M840 2108L836 2120" />

        <Mark d={STAR} x={291} y={310} />
        <Mark d={STAR} x={806} y={419} />
        <Mark d={STAR} x={1193} y={540} />
        <Mark d={STAR} x={810} y={284} s={0.5} r={20} />
        <Mark d={STAR} x={35} y={1571} />
        <Mark d={STAR} x={489} y={1547} />
        <Mark d={STAR} x={430} y={1419} s={0.52} r={12} />
        <Mark d={STAR} x={297} y={1680} s={0.52} r={12} />
        <Mark d={STAR} x={721} y={1734} s={0.52} r={12} />
        <Mark d={STAR} x={609} y={1837} s={0.5} r={12} />
        <Mark d={STAR} x={1276} y={2361} s={0.5} r={12} />
        <Mark d={SPARKLE} x={505} y={512} />
        <Mark d={SPARKLE} x={797} y={506} />
        <Mark d={SPARKLE} x={342} y={1561} />
        <Mark d={SPARKLE} x={815} y={1378} />
        <Mark d={SPARKLE} x={1017} y={2043} s={1.1} />
        <Mark d={SPARKLE} x={1211} y={2226} s={1.1} />
        <Mark d={SPARKLE} x={5} y={2222} />
        <Mark d={SPARKLE} x={10} y={2453} />
        <Mark d={SPARKLE} x={559} y={2533} s={1.8} sy={0.8} />
        <Mark d={HEART} x={171} y={665} s={0.78} r={10} />
        <Mark d={HEART} x={86} y={1655} s={0.76} />
        <Mark d={HEART} x={1143} y={2149} s={0.98} sy={0.82} />
        <path d="M642 635C630 612 615 620 617 640C620 655 632 665 642 672" />
        <Mark d={FLAKE} x={889} y={502} r={-3} />
        <Mark d={FLAKE} x={648} y={1742} s={0.82} r={-3} />
        <Mark d={FLAKE} x={561} y={1868} s={0.82} r={-3} />
      </svg>
    </div>
  );
}

/* ---------- Header ---------- */

function StatusBar() {
  return (
    <div className="flex h-[146px] items-center justify-between pr-[82px] pl-[95px]">
      <div className="flex items-center gap-[14px]">
        <span className="text-[50px] leading-none font-semibold tracking-[0.8px]">15:19</span>
        <svg width="44" height="44" viewBox="0 0 44 44" fill="none" stroke="#000" strokeWidth="4.6" strokeLinejoin="round">
          <path d="M37.5 4.500L4 19.500C2 20.700 2.400 23.200 5 23.400L20 23.600V38.500C20.300 41.400 23 41.600 24 39.500L39.500 6.500C40 4.800 39 3.900 37.500 4.500Z" />
        </svg>
      </div>
      <div className="flex items-center">
        <div className="flex h-[38px] items-end gap-[6px]">
          <i className="h-[14px] w-[10px] rounded-[3px] bg-black" />
          <i className="h-[21px] w-[10px] rounded-[3px] bg-black" />
          <i className="h-[29px] w-[10px] rounded-[3px] bg-black" />
          <i className="h-[37px] w-[10px] rounded-[3px] bg-[#c6bfb3]" />
        </div>
        <span className="ml-[14px] text-[41px] leading-none font-medium tracking-[-3.400px]">LTE</span>
        <div className="ml-[16px] flex h-[39px] w-[75px] items-center rounded-[13px] border-[3px] border-[#969088] pl-[3px]">
          <i className="h-[28px] w-[19px] rounded-[6px] bg-[#f8cd45]" />
        </div>
        <i className="ml-[3px] h-[13px] w-[4px] rounded-r-full bg-[#969088]" />
      </div>
    </div>
  );
}

function Avatar() {
  return (
    <div className="relative flex h-[111px] w-[111px] items-center justify-center rounded-full bg-[#ededee]">
      <span className="-mt-[14px] mr-[6px] font-['Open_Sans'] text-[88px] leading-none font-extrabold text-[#2c2c2c]">a</span>
      <svg className="absolute top-[23px] left-[62px]" width="26" height="29" viewBox="0 0 26 29" fill="#91c0f8">
        <path d="M0 0H23Q26 0 26 3V29H23C22 14 14 6 3 4Q0 3 0 0Z" />
      </svg>
    </div>
  );
}

function Header() {
  return (
    <header className="relative h-[274px] border-b border-[#c3c3b8] bg-[linear-gradient(90deg,#eaefde_0px,#ecefde_420px,#f0ecde_620px,#f4ebdf_780px,#f4ebdf_1284px)]">
      <StatusBar />
      <div className="grid h-[126px] grid-cols-[1fr_auto_1fr] items-center px-[18px]">
        <div className="ml-[5px] flex items-center gap-[19px] text-[#367bdf]">
          <svg width="40" height="66" viewBox="0 0 40 66" fill="none" stroke="currentColor" strokeWidth="8.500" strokeLinecap="round" strokeLinejoin="round">
            <path d="M33 5L5.500 32.500L33 60.500" />
          </svg>
          <span className="pb-[3px] text-[49px] leading-none">Назад</span>
        </div>
        <div className="flex flex-col items-center pb-[4px]">
          <span className="text-[49px] leading-[58px] font-semibold">ASAP_feedback</span>
          <span className="text-[39px] leading-[46px] text-[#7e7a73]">бот</span>
        </div>
        <div className="flex justify-end">
          <Avatar />
        </div>
      </div>
    </header>
  );
}

/* ---------- Conversation ---------- */

function BotInfo() {
  return (
    <section className="mx-[34px] h-[643px] rounded-[54px] border border-[#a39a52]/70 bg-white px-[34px] pt-[19px] text-[49px] leading-[66px] whitespace-nowrap">
      <h1 className="font-semibold">Что умеет этот бот?</h1>
      <p className="mt-[4px] tracking-[-0.180px]">
        Привет, это бот создан для того, чтобы вы
        <br />
        могли быстро и удобно оставить свой отзыв о
        <br />
        работе различных университетских сервисов и
        <br />
        структур
      </p>
      <p className="mt-[66px] tracking-[-0.400px]">Давайте сделаем ДВФУ лучше!</p>
      <p className="mt-[66px] tracking-[-0.500px]">С любовью, студенты ASAP</p>
    </section>
  );
}

function BackEmoji() {
  return (
    <span role="img" aria-label="back" className="mr-[1px] flex h-[60px] w-[60px] items-center justify-center rounded-[12px] border-[3px] border-[#5d7897] border-t-[#597da6] bg-linear-to-b from-[#cbd9e8] via-[#8aa8c6] via-30% to-[#61768f]">
      <svg width="42" height="34" viewBox="0 0 42 34" fill="#fff">
        <path d="M1 17L20 1V10.500H40V23.500H20V33Z" />
      </svg>
    </span>
  );
}

function Conversation() {
  const key = "flex h-[126px] items-center justify-center rounded-[24px] pr-[3px] pb-[5px] text-[48px] font-medium tracking-[-0.580px] text-white";
  return (
    <main className="relative h-[2267px] pt-[436px]">
      <BotInfo />
      <div className="mt-[424px] ml-[547px] flex h-[60px] w-[189px] items-center justify-center rounded-full bg-[#aaa73a] pr-[2px] pb-[3px] text-[36px] font-medium tracking-[0.050px] text-white">
        Сегодня
      </div>
      <div className="mt-[30px] ml-[32px] flex h-[101px] w-[929px] justify-between rounded-t-[50px] rounded-b-[28px] border border-[#a5a25a]/60 bg-white pr-[36px] pl-[26px]">
        <span className="pt-[18px] text-[47px] leading-[52px] tracking-[-0.500px]">чо редачить</span>
        <span className="pt-[43px] text-[30px] leading-[38px] tracking-[0.900px] text-[#97979b]">15:19</span>
      </div>
      <div className="mt-[14px] ml-[30px] flex w-[933px] flex-col gap-[12px]">
        <button className={`${key} bg-[linear-gradient(90deg,#b4ab37,#b8aa37_32%,#b2a938_50%,#9fa83b_70%,#86a640_86%,#80a642)]`}>
          edit title (you will need to edit qr codes)
        </button>
        <button className={`${key} bg-[linear-gradient(90deg,#b6ab37,#b8aa37_32%,#b0a938_52%,#9ba83b_68%,#81a641_86%,#7ba643)]`}>edit description</button>
        <button className={`${key} bg-[linear-gradient(90deg,#b9ab37,#b8aa37_32%,#aea938_52%,#98a73c_68%,#7ca743_86%,#76a645)]`}>delete</button>
        <button className={`${key} bg-[linear-gradient(90deg,#bbac37,#b8aa37_32%,#aca938_52%,#94a73d_68%,#7ba743_86%,#74a646)]`}>
          <BackEmoji />
        </button>
      </div>
    </main>
  );
}

/* ---------- Composer ---------- */

function Composer() {
  return (
    <footer className="relative h-[237px] border-t border-[#bdbdb0] bg-[linear-gradient(90deg,#f1eddb_0px,#f0eedc_400px,#ecefde_640px,#e5eee1_930px,#e2eee3_1284px)]">
      <div className="flex items-center pt-[17px] pl-[30px]">
        <button className="flex h-[99px] w-[276px] items-center gap-[27px] rounded-full bg-[#367bdf] pl-[36px] text-white">
          <span className="flex flex-col gap-[10px]">
            <i className="h-[5px] w-[44px] rounded-full bg-white" />
            <i className="h-[5px] w-[44px] rounded-full bg-white" />
            <i className="h-[5px] w-[44px] rounded-full bg-white" />
          </span>
          <span className="pb-[3px] text-[47px] leading-none font-medium tracking-[-0.800px]">Меню</span>
        </button>
        <svg className="ml-[32px]" width="64" height="73" viewBox="0 0 64 73" fill="none" stroke="#878e9b" strokeWidth="5" strokeLinecap="round">
          <path d="M36.500 22.800L19 40.500C15 44.500 15.200 49.500 18 52.800C21.500 56.300 27 56 31 52.500L55 28.500C61 22 61 13 55.500 7.500C49.500 2 41 2 35 7.500L9.500 33C1 42 1 53.500 8 61.500C16 69.500 29 69.500 38 61.500L58.800 44.800" />
        </svg>
        <div className="ml-[31px] flex h-[99px] w-[723px] items-center justify-between rounded-full border-[3px] border-[#e4e4e6] bg-white pr-[18px] pl-[37px]">
          <span className="pb-[3px] text-[47px] leading-none tracking-[-0.700px] text-[#bfbfbf]">Сообщение...</span>
          <svg width="60" height="60" viewBox="0 0 60 60" fill="none" stroke="#a1a8b1" strokeWidth="5" strokeLinejoin="round">
            <path d="M29.500 2.500A27.500 27.500 0 1 0 57.500 30.500L31.500 3.200Q30.500 2.500 29.500 2.500ZM27.500 3.500C23.500 22 32 36.500 48 36C52 36 55.500 35 57 33.500" />
          </svg>
        </div>
        <svg className="ml-[36px]" width="56" height="76" viewBox="0 0 56 76" fill="none" stroke="#878e9b" strokeWidth="5" strokeLinecap="round">
          <rect x="15.500" y="3" width="25" height="46" rx="12.500" />
          <path d="M3 37.500C3 52 14 61 28 61C42 61 53 52 53 37.500M28 61V73" />
        </svg>
      </div>
      <div className="mx-auto mt-[81px] h-[15px] w-[459px] rounded-full bg-black" />
    </footer>
  );
}

export default function App() {
  return (
    <div className="relative h-[2778px] w-[1284px] overflow-hidden font-['Inter','Noto_Sans',sans-serif] text-black">
      <Wallpaper />
      <Header />
      <Conversation />
      <Composer />
    </div>
  );
}
